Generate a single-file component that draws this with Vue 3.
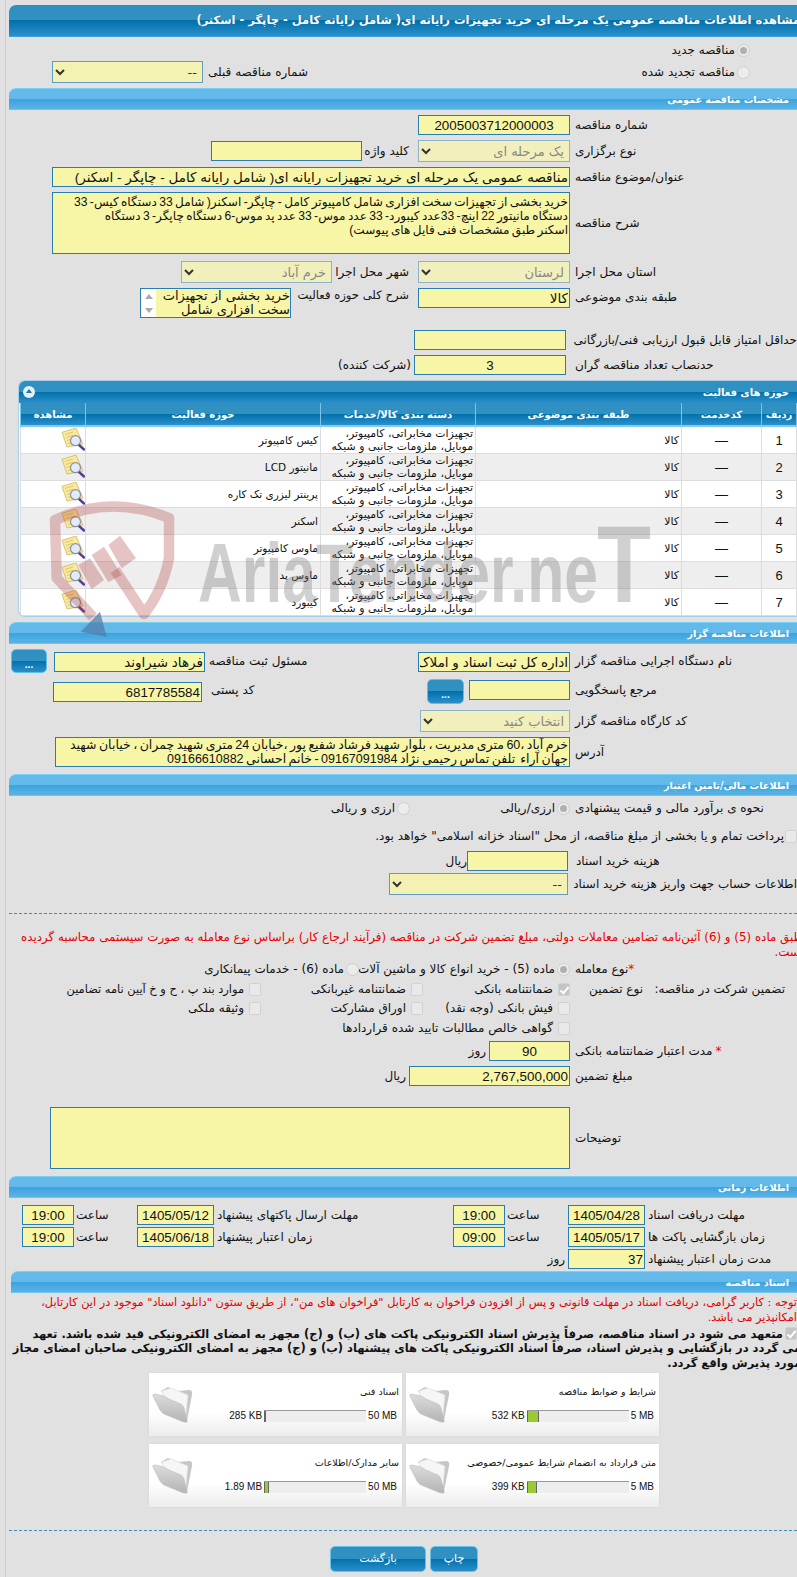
<script setup>
const rows = [
  { n: 1, name: "کیس کامپیوتر" },
  { n: 2, name: "مانیتور LCD" },
  { n: 3, name: "پرینتر لیزری تک کاره" },
  { n: 4, name: "اسکنر" },
  { n: 5, name: "ماوس کامپیوتر" },
  { n: 6, name: "ماوس پد" },
  { n: 7, name: "کیبورد" },
];

const cards = [
  { title: "شرایط و ضوابط مناقصه", max: "5 MB", size: "532 KB", fill: 12 },
  { title: "اسناد فنی", max: "50 MB", size: "285 KB", fill: 1 },
  { title: "متن قرارداد به انضمام شرایط عمومی/خصوصی", max: "5 MB", size: "399 KB", fill: 10 },
  { title: "سایر مدارک/اطلاعات", max: "50 MB", size: "1.89 MB", fill: 5 },
];

const description = "خرید بخشی از تجهیزات سخت افزاری شامل کامپیوتر کامل - چاپگر- اسکنر( شامل 33 دستگاه کیس- 33 دستگاه مانیتور 22 اینچ- 33عدد کیبورد- 33 عدد موس- 33 عدد پد موس-6 دستگاه چاپگر- 3 دستگاه\nاسکنر طبق مشخصات فنی فایل های پیوست)";
</script>

<template>
  <div class="page">
    <div class="title"><span>مشاهده اطلاعات مناقصه عمومی یک مرحله ای خرید تجهیزات رایانه ای( شامل رایانه کامل - چاپگر - اسکنر)</span></div>

    <div class="row t6 radios h14">
      <i class="radio on"></i><span>مناقصه جدید</span>
    </div>
    <div class="row t4 radios">
      <i class="radio"></i><span>مناقصه تجدید شده</span>
      <div class="push">
        <span class="w101">شماره مناقصه قبلی</span>
        <div class="sel w151 live"><span>--</span><svg class="chev" viewBox="0 0 10 8"><path d="M1 2l4 4 4-4" /></svg></div>
      </div>
    </div>

    <div class="sec t5">مشخصات مناقصه عمومی</div>

    <div class="row t5">
      <label class="lab">شماره مناقصه</label>
      <input class="fld w152 num center" readonly value="2005003712000003" />
    </div>
    <div class="row t5">
      <label class="lab">نوع برگزاری</label>
      <div class="sel w152"><span>یک مرحله ای</span><svg class="chev" viewBox="0 0 10 8"><path d="M1 2l4 4 4-4" /></svg></div>
      <label class="lab2 w47">کلید واژه</label>
      <input class="fld w151" readonly value="" />
    </div>
    <div class="row t5">
      <label class="lab">عنوان/موضوع مناقصه</label>
      <input class="fld w518 big" readonly value="مناقصه عمومی یک مرحله ای خرید تجهیزات رایانه ای( شامل رایانه کامل - چاپگر - اسکنر)" />
    </div>
    <div class="row t5">
      <label class="lab">شرح مناقصه</label>
      <textarea class="fld w518 big area62" readonly :value="description"></textarea>
    </div>
    <div class="row t7">
      <label class="lab">استان محل اجرا</label>
      <div class="sel w152"><span>لرستان</span><svg class="chev" viewBox="0 0 10 8"><path d="M1 2l4 4 4-4" /></svg></div>
      <label class="lab2 w77">شهر محل اجرا</label>
      <div class="sel w151"><span>خرم آباد</span><svg class="chev" viewBox="0 0 10 8"><path d="M1 2l4 4 4-4" /></svg></div>
    </div>
    <div class="row t5 top">
      <label class="lab pad1">طبقه بندی موضوعی</label>
      <input class="fld w152 big" readonly value="کالا" />
      <label class="lab2 w118">شرح کلی حوزه فعالیت</label>
      <div class="list">
        <div class="list-txt">خرید بخشی از تجهیزات سخت افزاری شامل</div>
        <div class="list-bar"><i class="up"></i><i class="down"></i></div>
      </div>
    </div>
    <div class="row t12">
      <label class="lab">حداقل امتیاز قابل قبول ارزیابی فنی/بازرگانی</label>
      <input class="fld w152 shift" readonly value="" />
    </div>
    <div class="row t5">
      <label class="lab">حدنصاب تعداد مناقصه گران</label>
      <input class="fld w152 shift num center" readonly value="3" />
      <span class="unit">(شرکت کننده)</span>
    </div>

    <div class="panel t5">
      <div class="panel-head">
        <span>حوزه های فعالیت</span>
        <i class="toggle"></i>
      </div>
      <table class="grid">
        <colgroup>
          <col class="c1" /><col class="c2" /><col class="c3" /><col class="c4" /><col class="c5" /><col class="c6" />
        </colgroup>
        <thead>
          <tr>
            <th>ردیف</th><th>کدخدمت</th><th>طبقه بندی موضوعی</th><th>دسته بندی کالا/خدمات</th><th>حوزه فعالیت</th><th>مشاهده</th>
          </tr>
        </thead>
        <tbody>
          <tr v-for="r in rows" :key="r.n">
            <td class="mid">{{ r.n }}</td>
            <td class="mid">—</td>
            <td class="cat">کالا</td>
            <td class="cat">تجهیزات مخابراتی، کامپیوتر، موبایل، ملزومات جانبی و شبکه</td>
            <td class="name">{{ r.name }}</td>
            <td class="view">
              <svg class="doc" viewBox="0 0 24 24">
                <path d="M1 4.300L15 0l7 16-16 3z" fill="#f8ea9c" stroke="#cfae57" stroke-width=".7" />
                <path d="M4 6.500l8-2.500M5 9.500l7-2.200M6 12.500l3-1M7 15.500l3-1" stroke="#dcc069" stroke-width=".9" fill="none" />
                <path d="M18 17l5 4.500" stroke="#553c98" stroke-width="2.400" stroke-linecap="round" />
                <circle cx="14.500" cy="12.700" r="5" fill="#e3ecf6" stroke="#8792a6" stroke-width="1.200" />
              </svg>
            </td>
          </tr>
        </tbody>
      </table>
    </div>

    <div class="sec t5">اطلاعات مناقصه گزار</div>

    <div class="row t5 h24">
      <label class="lab">نام دستگاه اجرایی مناقصه گزار</label>
      <input class="fld w152 big drop2" readonly value="اداره کل ثبت اسناد و املاک" />
      <label class="lab-l">مسئول ثبت مناقصه</label>
      <input class="fld w151 big drop2" readonly value="فرهاد شیراوند" />
      <button class="more w35">...</button>
    </div>
    <div class="row t6 top h25">
      <label class="lab pad3">مرجع پاسخگویی</label>
      <input class="fld w101c drop1" readonly value="" />
      <button class="more w37">...</button>
      <label class="lab-p pad3">کد پستی</label>
      <input class="fld w149 num drop3" readonly value="6817785584" />
    </div>
    <div class="row t6">
      <label class="lab">کد کارگاه مناقصه گزار</label>
      <div class="sel w150"><span>انتخاب کنید</span><svg class="chev" viewBox="0 0 10 8"><path d="M1 2l4 4 4-4" /></svg></div>
    </div>
    <div class="row t5">
      <label class="lab">آدرس</label>
      <textarea class="fld w515 big area30" readonly>خرم آباد ،60 متری مدیریت ، بلوار شهید فرشاد شفیع پور ،خیابان 24 متری شهید چمران ، خیابان شهید جهان آراء  تلفن تماس رحیمی نژاد 09167091984 - خانم احسانی 09166610882</textarea>
    </div>

    <div class="sec t7">اطلاعات مالی/تامین اعتبار</div>

    <div class="row t5 h14">
      <label class="lab">نحوه ی برآورد مالی و قیمت پیشنهادی</label>
      <i class="radio on r5"></i><span class="opt w145">ارزی/ریالی</span>
      <i class="radio"></i><span class="opt">ارزی و ریالی</span>
    </div>
    <div class="row t14 h14">
      <i class="check"></i><span class="opt-0">پرداخت تمام و یا بخشی از مبلغ مناقصه، از محل "اسناد خزانه اسلامی" خواهد بود.</span>
    </div>
    <div class="row t8">
      <label class="lab lab1">هزینه خرید اسناد</label>
      <input class="fld w101d" readonly value="" />
      <span class="rial">ریال</span>
    </div>
    <div class="row t2">
      <label class="lab lab1">اطلاعات حساب جهت واریز هزینه خرید اسناد</label>
      <div class="sel w179 live"><span>--</span><svg class="chev" viewBox="0 0 10 8"><path d="M1 2l4 4 4-4" /></svg></div>
    </div>

    <div class="dash t19"></div>

    <p class="warn">طبق ماده (5) و (6) آئین‌نامه تضامین معاملات دولتی، مبلغ تضمین شرکت در مناقصه (فرآیند ارجاع کار) براساس نوع معامله به صورت سیستمی محاسبه گردیده است.</p>

    <div class="row t2 h14">
      <label class="lab"><b class="star">*</b>نوع معامله</label>
      <i class="radio on r5"></i><span class="opt w196">ماده (5) - خرید انواع کالا و ماشین آلات</span>
      <i class="radio"></i><span class="opt">ماده (6) - خدمات پیمانکاری</span>
    </div>
    <div class="row t6 h14">
      <span class="guar">تضمین شرکت در مناقصه:</span>
      <span class="kind">نوع تضمین</span>
      <i class="check on"></i><span class="opt5 w130">ضمانتنامه بانکی</span>
      <i class="check"></i><span class="opt5 w145b">ضمانتنامه غیربانکی</span>
      <i class="check"></i><span class="opt5 tight">موارد بند پ ، ح و خ آیین نامه تضامین</span>
    </div>
    <div class="row t5 h14 ind">
      <i class="check"></i><span class="opt5 w130">فیش بانکی (وجه نقد)</span>
      <i class="check"></i><span class="opt5 w145b">اوراق مشارکت</span>
      <i class="check"></i><span class="opt5">وثیقه ملکی</span>
    </div>
    <div class="row t6 h14 ind">
      <i class="check"></i><span class="opt5">گواهی خالص مطالبات تایید شده قراردادها</span>
    </div>
    <div class="row t6">
      <label class="lab"><b class="star gap">*</b>مدت اعتبار ضمانتنامه بانکی</label>
      <input class="fld w81 num center" readonly value="90" />
      <span class="unit">روز</span>
    </div>
    <div class="row t5">
      <label class="lab">مبلغ تضمین</label>
      <input class="fld w161 num" readonly value="2,767,500,000" />
      <span class="unit">ریال</span>
    </div>
    <div class="row t21">
      <label class="lab">توضیحات</label>
      <textarea class="fld w520 area62" readonly></textarea>
    </div>

    <div class="sec t7">اطلاعات زمانی</div>

    <div class="row t7">
      <label class="dlab">مهلت دریافت اسناد</label>
      <input class="fld date num center" readonly value="1405/04/28" />
      <span class="sa">ساعت</span>
      <input class="fld time num center" readonly value="19:00" />
      <label class="dlab2">مهلت ارسال پاکتهای پیشنهاد</label>
      <input class="fld date num center" readonly value="1405/05/12" />
      <span class="sa">ساعت</span>
      <input class="fld time num center" readonly value="19:00" />
    </div>
    <div class="row t2">
      <label class="dlab">زمان بازگشایی پاکت ها</label>
      <input class="fld date num center" readonly value="1405/05/17" />
      <span class="sa">ساعت</span>
      <input class="fld time num center" readonly value="09:00" />
      <label class="dlab2">زمان اعتبار پیشنهاد</label>
      <input class="fld date num center" readonly value="1405/06/18" />
      <span class="sa">ساعت</span>
      <input class="fld time num center" readonly value="19:00" />
    </div>
    <div class="row t2">
      <label class="dlab">مدت زمان اعتبار پیشنهاد</label>
      <input class="fld date num" readonly value="37" />
      <span class="unit">روز</span>
    </div>

    <div class="sec sec-docs t2">اسناد مناقصه</div>

    <p class="warn note">توجه : کاربر گرامی، دریافت اسناد در مهلت قانونی و پس از افزودن فراخوان به کارتابل "فراخوان های من"، از طریق ستون "دانلود اسناد" موجود در این کارتابل، امکانپذیر می باشد.</p>
    <p class="pledge"><i class="check on pledge-box"></i>متعهد می شود در اسناد مناقصه، صرفاً پذیرش اسناد الکترونیکی پاکت های (ب) و (ج) مجهز به امضای الکترونیکی قید شده باشد. تعهد می گردد در بازگشایی و پذیرش اسناد، صرفاً اسناد الکترونیکی پاکت های پیشنهاد (ب) و (ج) مجهز به امضای الکترونیکی صاحبان امضای مجاز مورد پذیرش واقع گردد.</p>

    <div class="cards">
      <div v-for="c in cards" :key="c.title" class="card">
        <div class="card-body">
          <div class="card-title">{{ c.title }}</div>
          <div class="meter">
            <span class="meter-max">{{ c.max }}</span>
            <div class="bar"><div class="bar-fill" :style="{ width: c.fill + 'px' }"></div></div>
            <span class="meter-size">{{ c.size }}</span>
          </div>
        </div>
        <svg class="folder" viewBox="0 0 42 38">
          <defs>
            <linearGradient id="fl" x1="0" y1="0" x2="0" y2="1">
              <stop offset="0" stop-color="#dcdcdc" />
              <stop offset="1" stop-color="#b4b4b4" />
            </linearGradient>
          </defs>
          <path d="M9 5l7-4 10 4 11-1q4 0 3 5l-5 25q-1 3-3 1z" fill="#c6c6c6" />
          <path d="M10 5l9-3 17 7-2 20L14 20z" fill="#f6f6f6" stroke="#dcdcdc" stroke-width=".6" />
          <path d="M1 10q-1-2 2-2l9 2q2 1 5 3l12 5q2 1 3 4l3 12q1 3-2 2-2 0-4-1L12 28q-2-1-4-4z" fill="url(#fl)" stroke="#bdbdbd" stroke-width=".6" />
        </svg>
      </div>
    </div>

    <div class="dash t23"></div>

    <div class="actions">
      <button class="act act-print">چاپ</button>
      <button class="act act-back">بازگشت</button>
    </div>

    <svg class="mark" viewBox="0 0 640 170">
      <path class="mark-line" d="M48 127L11.700 88 10 30Q66 4 124 28L124 68Q118 100 99 124L70 80" />
      <path class="mark-red" d="M63.300 55L75 45.700 91 68.300 76.700 78.300zM46.700 65L59 56.700 76.700 85 63.300 92.300zM33.300 75L45 68.300 59 90 46.700 99.300z" />
      <path d="M61.700 146.700L35.700 141.700 55 121.700z" fill="#4f7aa8" fill-opacity=".7" />
      <text x="153" y="112" textLength="400" lengthAdjust="spacingAndGlyphs" class="mark-txt">AriaTender.ne</text>
      <text x="552" y="112" textLength="54" lengthAdjust="spacingAndGlyphs" class="mark-txt mark-t">T</text>
    </svg>
  </div>
</template>

<style>
html, body {
  margin: 0;
  background: #e1e1e1;
  overflow: hidden;
}
</style>

<style scoped>
.page {
  position: relative;
  width: 792px;
  height: 1577px;
  margin-left: 5px;
  padding-top: 5px;
  box-sizing: border-box;
  border-left: 1px solid #cfcfcf;
  overflow: hidden;
  font-family: "DejaVu Sans", sans-serif;
  font-size: 12px;
  color: #111;
  direction: rtl;
}

.t2 { margin-top: 2px; }
.t4 { margin-top: 4px; }
.t5 { margin-top: 5px; }
.t6 { margin-top: 6px; }
.t7 { margin-top: 7px; }
.t8 { margin-top: 8px; }
.t12 { margin-top: 12px; }
.t14 { margin-top: 14px; }
.t19 { margin-top: 18px; }
.t21 { margin-top: 21px; }
.t23 { margin-top: 23px; }

.title {
  margin-left: 3px;
  height: 32px;
  box-sizing: border-box;
  padding-top: 8px;
  border-top-left-radius: 7px;
  border-bottom: 1px solid #3aa0e0;
  background: linear-gradient(#2f8fc0 0, #3191c1 50%, #0071ab 50%, #2c8fca 100%);
  color: #fff;
  font-weight: bold;
  font-size: 11.500px;
  white-space: nowrap;
}
.title span {
  margin-right: -3px;
  text-shadow: 0 0 1px #0a5a88;
}

.sec {
  margin-left: 3px;
  height: 22px;
  box-sizing: border-box;
  padding: 3px 8px 0 0;
  border-top: 1px solid #7cd0f2;
  border-bottom: 1px solid #70c4ec;
  border-top-left-radius: 7px;
  background: linear-gradient(#63baea 0, #63baea 50%, #3ca2de 50%, #5ab4e6 100%);
  color: #fff;
  font-weight: bold;
  font-size: 9.600px;
  line-height: 16px;
}
.sec-docs { margin-left: 5px; }

.row {
  display: flex;
  align-items: center;
  width: 791px;
}
.row > * { min-width: 0; }
.row.top { align-items: flex-start; }
.h14 { height: 14px; }
.h24 { height: 24px; }
.h25 { height: 25px; }

.radios { padding-right: 47px; box-sizing: border-box; }
.radios > span { margin-right: 2px; }
.push {
  display: flex;
  align-items: center;
  margin-right: auto;
  margin-left: 46px;
}

.lab {
  flex: 0 0 222px;
  text-align: left;
  white-space: nowrap;
}
.lab1 { flex-basis: 221px; }
.pad1 { padding-top: 2px; }
.pad3 { padding-top: 4px; }
.lab2 {
  margin-right: 9px;
  white-space: nowrap;
}
.w47 { flex: 0 0 43px; }
.w77 { flex: 0 0 73px; }
.w118 { flex: 0 0 114px; font-size: 11.600px; }
.w101 { flex: 0 0 101px; text-align: left; margin-left: 1px; white-space: nowrap; }
.lab-l { flex: 0 0 209px; text-align: left; white-space: nowrap; }
.lab-p { flex: 0 0 216px; text-align: left; white-space: nowrap; }

.fld {
  display: block;
  margin: 0 5px 0 0;
  box-sizing: border-box;
  height: 20px;
  padding: 0 1px;
  border: 1px solid #2a7db0;
  border-radius: 0;
  outline: none;
  background: #f7f6a6;
  color: #111;
  font-family: "DejaVu Sans", sans-serif;
  font-size: 11.500px;
  direction: rtl;
  resize: none;
}
.big { font-family: "Liberation Sans", "DejaVu Sans", sans-serif; font-size: 13.500px; }
textarea.fld {
  font-size: 12.080px;
  word-spacing: -1px;
  line-height: 14px;
  padding-top: 2px;
  overflow: hidden;
}
.num { font-family: "Liberation Sans", sans-serif; font-size: 13.400px; }
.center { text-align: center; }
.w151 { width: 151px; margin-right: 4px; }
.w152 { width: 152px; }
.w518 { width: 518px; }
.w515 { width: 515px; }
.w520 { width: 520px; }
.w150 { width: 150px; }
.w179 { width: 179px; }
.w81 { width: 81px; }
.w161 { width: 161px; }
.w101c { width: 101px; }
.w101d { width: 101px; margin-right: 8px; }
.w149 { width: 149px; margin-right: 9px; }
.area62 { height: 62px; }
textarea.area30 { height: 30px; padding-top: 0; font-size: 12.500px; }
.shift { margin-right: 9px; }
.drop1 { margin-top: 1px; }
.drop2 { margin-top: 2px; }
.drop3 { margin-top: 3px; }

.date { width: 77px; margin-right: 3px; }
.time { width: 52px; margin-right: 2px; }
.dlab { flex: 0 0 149px; text-align: left; white-space: nowrap; }
.dlab2 { flex: 0 0 236px; text-align: left; white-space: nowrap; }
.sa { flex: 0 0 33px; margin-right: 28px; text-align: left; white-space: nowrap; }

.sel {
  display: flex;
  align-items: center;
  justify-content: space-between;
  margin-right: 5px;
  box-sizing: border-box;
  height: 22px;
  padding: 0 5px 0 2px;
  border: 1px solid #8fb3c6;
  background: #f1efbb;
  color: #888;
  font-size: 13px;
}
.sel.w151 { margin-right: 4px; }
.sel.w179 { margin-right: 8px; }
.sel.live {
  border-color: #5f9dc2;
  background: #f3f2b2;
  color: #333;
}
.chev {
  width: 10px;
  height: 8px;
  fill: none;
  stroke: #333;
  stroke-width: 2;
}

.unit { margin-right: 3px; white-space: nowrap; }

.list {
  display: flex;
  margin-right: 4px;
  box-sizing: border-box;
  width: 151px;
  height: 30px;
  border: 1px solid #2a7db0;
  background: #fff;
}
.list-txt {
  flex: 1;
  padding: 0 0 0 2px;
  background: #f7f6a6;
  line-height: 14px;
  font-size: 13px;
  overflow: hidden;
}
.list-bar {
  flex: 0 0 15px;
  display: flex;
  flex-direction: column;
  align-items: center;
  justify-content: space-around;
}
.up, .down {
  width: 0;
  height: 0;
  border-left: 4px solid transparent;
  border-right: 4px solid transparent;
}
.up { border-bottom: 5px solid #aaa; }
.down { border-top: 5px solid #aaa; }

.panel {
  margin-left: 12px;
  border: 1px solid #a9d0e6;
  border-right: 0;
  border-radius: 7px 0 0 7px;
  background: #fff;
  overflow: hidden;
}
.panel-head {
  display: flex;
  align-items: center;
  justify-content: space-between;
  height: 22px;
  padding: 0 8px 0 4px;
  background: linear-gradient(#2f8fc0 0, #3191c1 50%, #0071ab 50%, #2c8fca 100%);
  color: #fff;
  font-weight: bold;
  font-size: 10px;
}
.toggle {
  position: relative;
  width: 12px;
  height: 12px;
  border-radius: 50%;
  background: #e6f0f6;
}
.toggle::after {
  content: "";
  position: absolute;
  top: 3px;
  left: 3px;
  border-left: 3px solid transparent;
  border-right: 3px solid transparent;
  border-bottom: 4px solid #1b75a8;
}

.grid {
  width: 776px;
  margin-left: 2px;
  border-collapse: collapse;
  table-layout: fixed;
  font-size: 10px;
}
.c1 { width: 35px; }
.c2 { width: 80px; }
.c3 { width: 206px; }
.c4 { width: 155px; }
.c5 { width: 235px; }
.c6 { width: 65px; }
.grid th {
  height: 22px;
  padding: 0;
  border-right: 1px solid #7cc4e6;
  border-left: 1px solid #7cc4e6;
  border-bottom: 2px solid #7fcdf0;
  background: linear-gradient(#2f8fc0 0, #3191c1 50%, #0071ab 50%, #2c8fca 100%);
  color: #fff;
  font-size: 10px;
  font-weight: bold;
  white-space: nowrap;
}
.grid td {
  height: 27px;
  box-sizing: border-box;
  padding: 0 2px;
  border: 1px solid #ddd;
  line-height: 13px;
  overflow: hidden;
}
.grid tbody tr:nth-child(even) td { background: #eee; }
.grid td.mid {
  text-align: center;
  font-family: "Liberation Sans", sans-serif;
  font-size: 13px;
}
.grid td.cat { font-size: 10.900px; }
.grid td.name { font-size: 10.500px; }
.grid td.view { text-align: left; padding: 0; }
.doc {
  display: block;
  width: 24px;
  height: 24px;
  margin-left: 39px;
}

.more {
  display: block;
  margin: 0;
  padding: 0;
  border: 1px solid #5cc0ea;
  border-radius: 5px;
  background: linear-gradient(#2f8fc0 0, #3191c1 50%, #0071ab 50%, #2c8fca 100%);
  color: #fff;
  font-size: 10px;
  font-weight: bold;
  line-height: 30px;
}
.w35 { width: 36px; height: 24px; margin-right: 7px; }
.w37 { width: 37px; height: 25px; margin-right: 5px; }

.radio {
  position: relative;
  flex: 0 0 13px;
  height: 13px;
  box-sizing: border-box;
  border: 1px solid #cfcfcf;
  border-radius: 50%;
  background: #ececec;
}
.radio.on::after {
  content: "";
  position: absolute;
  inset: 2px;
  border-radius: 50%;
  background: #b0b0b0;
}
.r5 { margin-right: 5px; }
.opt { white-space: nowrap; margin-right: 2px; }
.opt-0 { white-space: nowrap; margin-right: 1px; }
.opt5 { white-space: nowrap; margin-right: 5px; }
.tight { font-size: 11.400px; }
.w145 { flex: 0 0 145px; }
.w196 { flex: 0 0 196px; }
.w130 { flex: 0 0 130px; }
.w145b { flex: 0 0 145px; }

.check {
  position: relative;
  flex: 0 0 12px;
  height: 13px;
  box-sizing: border-box;
  border: 1px solid #d2d2d2;
  border-radius: 2px;
  background: #e9e9e9;
}
.check.on::after {
  content: "";
  position: absolute;
  left: 3px;
  top: 1px;
  width: 3px;
  height: 7px;
  border: solid #fff;
  border-width: 0 2px 2px 0;
  transform: rotate(40deg);
}
.check.on { background: #c4c4c4; }

.star { color: #e00; font-weight: normal; }
.star.gap { margin-left: 3px; }
.guar { flex: 0 0 126px; margin-right: 12px; white-space: nowrap; }
.kind { flex: 0 0 73px; margin-right: 16px; white-space: nowrap; }
.ind { padding-right: 227px; box-sizing: border-box; }

.dash {
  margin-left: 3px;
  border-top: 1px dashed #3f8fbd;
}

.warn {
  margin: 16px -6px 0 10px;
  color: #e60000;
  font-size: 11.850px;
  line-height: 15px;
}
.note {
  margin: 2px 0 0 15px;
  font-size: 11.350px;
}
.pledge {
  margin: 1.500px -4px 0 5px;
  font-weight: bold;
  font-size: 11.500px;
  line-height: 14.500px;
  color: #111;
}
.pledge-box {
  display: inline-block;
  margin-left: 2px;
  margin-right: 4px;
  vertical-align: -2px;
  width: 12px;
}

.cards {
  display: grid;
  grid-template-columns: 253px 253px;
  gap: 8px 4px;
  width: 510px;
  margin: 2.500px 138px 0 0;
}
.card {
  display: flex;
  height: 63px;
  background: linear-gradient(#fff 0, #fff 62%, #ececec 100%);
  box-shadow: 0 0 2px #d4d4d4;
}
.card-body {
  flex: 1;
  padding: 0 3px 0 4px;
}
.card-title {
  margin-top: 12px;
  height: 16px;
  font-size: 9.500px;
  line-height: 14px;
  white-space: nowrap;
}
.meter {
  display: flex;
  align-items: center;
  margin-top: 9px;
  font-family: "Liberation Sans", sans-serif;
  font-size: 10px;
}
.meter-max { margin-right: 2px; direction: ltr; white-space: nowrap; }
.bar {
  flex: 0 0 102px;
  height: 12px;
  margin-right: 2px;
  box-sizing: border-box;
  border-top: 1px solid #999;
  background: #ededed;
  direction: ltr;
}
.bar-fill {
  height: 11px;
  border-left: 1px solid #666;
  border-right: 1px solid #666;
  box-sizing: border-box;
  background: #9acb34;
}
.meter-size {
  margin-right: 2px;
  direction: ltr;
  white-space: nowrap;
}
.folder {
  flex: 0 0 42px;
  width: 42px;
  height: 38px;
  margin: 13px 0 0 3px;
}

.actions {
  display: flex;
  gap: 4px;
  margin: 15px 319px 0 0;
}
.act {
  height: 26px;
  padding: 0;
  border: 1px solid #66c2ea;
  border-radius: 5px;
  background: linear-gradient(#2f8fc0 0, #3191c1 50%, #0071ab 50%, #2c8fca 100%);
  color: #fff;
  font-family: "DejaVu Sans", sans-serif;
  font-size: 11px;
}
.act-print { width: 48px; }
.act-back { width: 96px; }

.mark {
  position: absolute;
  left: 39px;
  top: 490px;
  width: 640px;
  height: 170px;
  direction: ltr;
  pointer-events: none;
}
.mark-line {
  fill: none;
  stroke: #b03a3a;
  stroke-opacity: .3;
  stroke-width: 10.500;
  stroke-linejoin: round;
}
.mark-red {
  fill: #b03a3a;
  fill-opacity: .3;
}
.mark-txt {
  font-family: "Liberation Sans", sans-serif;
  font-weight: bold;
  font-size: 84px;
  fill: #7d7d7d;
  fill-opacity: .36;
}
.mark-t {
  font-size: 110px;
}
</style>
